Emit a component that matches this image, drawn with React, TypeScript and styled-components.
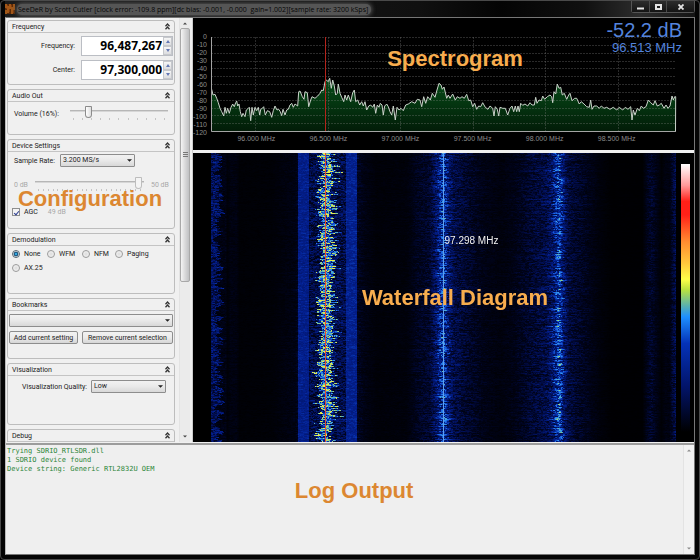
import React, { useEffect, useRef, useState } from 'react';
import styled, { createGlobalStyle, css } from 'styled-components';

const ui = 'Roboto, "Liberation Sans", sans-serif';
const sans = '"Liberation Sans", Arial, sans-serif';

const GlobalStyle = createGlobalStyle`
  * { box-sizing: border-box; }
  body { margin: 0; background: #000; font-family: ${ui}; font-size: 7px; line-height: 10px; color: #222; }
  button, input, select, textarea { font: inherit; color: inherit; margin: 0; }
`;

/* ---------- window frame ---------- */

const Frame = styled.div`
  display: flex;
  flex-direction: column;
  height: 100vh;
  min-height: 480px;
  padding: 0 4px 4px 4px;
  background: #050505;
  border: 1px solid #4a4a4a;
  border-radius: 4px;
  overflow: hidden;
`;

const TitleBar = styled.header`
  display: flex;
  align-items: flex-start;
  flex: none;
  height: 16px;
  background: linear-gradient(90deg, #1c1c1c 0%, #101010 60%, #040404 72%, #101010 84%, #2c2c2c 92%, #141414 100%);
`;

const TitleIcon = styled.svg`
  width: 10px;
  height: 10px;
  margin: 3px 2px 0 0;
  flex: none;
`;

const TitleText = styled.h1`
  margin: 3px 0 0;
  padding: 0 3px 0 1px;
  font: 400 7px/11px "Open Sans", "Noto Sans", sans-serif;
  color: #050505;
  white-space: pre;
  background: #555;
  border-radius: 5px;
  box-shadow: 0 0 4px 1px #555;
`;

const WindowButtons = styled.div`
  display: flex;
  margin-left: auto;
  height: 12px;
  border: 1px solid #555;
  border-top: 0;
  border-radius: 0 0 3px 3px;
`;

const WindowButton = styled.button<{ $wide?: boolean }>`
  width: ${(p) => (p.$wide ? 28 : 17)}px;
  padding: 0;
  border: 0;
  display: grid;
  place-items: center;
  background: linear-gradient(#2c2c2c, #141414);
  & + & { border-left: 1px solid #4a4a4a; }
`;

const Client = styled.main`
  display: flex;
  flex-direction: column;
  flex: 1;
  min-height: 0;
  border: 1px solid #777;
  border-left-color: #bbb;
  background: #f0f0f0;
`;

const Workspace = styled.div`
  display: flex;
  flex: 1;
  min-height: 0;
`;

/* ---------- sidebar ---------- */

const Sidebar = styled.aside`
  position: relative;
  display: flex;
  flex: none;
  width: 187px;
  padding-left: 1px;
  overflow: hidden;
  border-right: 1px solid #ccc;
`;

const Panels = styled.div`
  display: flex;
  flex-direction: column;
  gap: 4px;
  width: 168px;
  padding-top: 2px;
`;

const Panel = styled.section<{ $min: number }>`
  flex: none;
  min-height: ${(p) => p.$min}px;
  border: 1px solid #bdbdbd;
  border-radius: 3px;
`;

const PanelHead = styled.h2`
  display: flex;
  align-items: center;
  justify-content: space-between;
  height: 12px;
  margin: 0;
  padding: 0 4px;
  font-size: 7px;
  font-weight: 400;
  border-bottom: 1px solid #c4c4c4;
`;

const CollapseButton = styled.button`
  display: grid;
  padding: 0;
  border: 0;
  background: none;
`;

const SpinRow = styled.label`
  display: grid;
  grid-template-columns: 1fr 92px;
  column-gap: 6px;
  align-items: center;
  text-align: right;
  padding-right: 1px;
  margin-top: 3px;
  & + & { margin-top: 4px; }
`;

const SpinBox = styled.span`
  display: flex;
  height: 20px;
  background: #fff;
  border: 1px solid #bbbec4;
`;

const SpinInput = styled.input`
  flex: 1;
  min-width: 0;
  padding: 0 1px 0 0;
  border: 0;
  outline: 0;
  background: none;
  color: #000;
  font: 700 12px/18px "Open Sans", "Noto Sans", sans-serif;
  text-align: right;
`;

const SpinButtons = styled.span`
  display: grid;
  grid-template-rows: 1fr 1fr;
  width: 9px;
`;

const SpinButton = styled.button`
  display: grid;
  place-items: center;
  padding: 0;
  min-height: 0;
  border: 1px solid #c6c8cc;
  background: linear-gradient(#f6f6f6, #dcdde0);
`;

const SliderRow = styled.div<{ $cols: string; $muted?: boolean; $top: number }>`
  display: grid;
  grid-template-columns: ${(p) => p.$cols};
  padding: 0 6px;
  margin-top: ${(p) => p.$top}px;
  color: ${(p) => (p.$muted ? '#a8a8a8' : 'inherit')};
`;

const SliderCaption = styled.label`
  padding-top: 4px;
`;

const GainMax = styled.span`
  padding: 4px 0 0 7px;
  white-space: nowrap;
`;

const SliderTrack = styled.div`
  display: grid;
  row-gap: 1px;
`;

const thumb = css`
  appearance: none;
  width: 7px;
  height: 12px;
  margin-top: -5px;
  border: 1px solid #8b8b8b;
  border-radius: 1px 1px 4px 4px;
  background: linear-gradient(90deg, #fff, #dedede);
`;

const Slider = styled.input`
  appearance: none;
  width: 100%;
  height: 12px;
  background: none;
  &::-webkit-slider-runnable-track { height: 2px; background: #d6d6d6; border-top: 1px solid #b6b6b6; }
  &::-webkit-slider-thumb { ${thumb} }
  &:disabled::-webkit-slider-thumb { border-color: #bdbdbd; background: #f4f4f4; }
`;

const Ticks = styled.div`
  display: flex;
  justify-content: space-between;
  height: 2px;
  padding: 0 3px;
  i { width: 1px; background: #c4c4c4; }
`;

const Field = styled.div<{ $cols: string; $top: number; $align?: string }>`
  display: grid;
  grid-template-columns: ${(p) => p.$cols};
  align-items: center;
  padding: 0 1px;
  margin-top: ${(p) => p.$top}px;
  text-align: ${(p) => p.$align ?? 'left'};
`;

const FieldLabel = styled.label`
  padding: 0 4px 0 5px;
  white-space: nowrap;
`;

const SelectBox = styled.span`
  position: relative;
  display: block;
  svg { position: absolute; right: 3px; top: 5px; pointer-events: none; }
`;

const Select = styled.select`
  appearance: none;
  display: block;
  width: 100%;
  height: 13px;
  padding: 0 2px;
  border: 1px solid #8d8d8d;
  border-radius: 1px;
  background: linear-gradient(#f2f2f2 0%, #e9e9e9 50%, #d8d8d8 100%);
  line-height: 11px;
`;

const AgcRow = styled.div`
  display: flex;
  align-items: center;
  gap: 10px;
  padding-left: 4px;
  margin-top: 16px;
  color: #a8a8a8;
`;

const Choice = styled.label`
  display: flex;
  align-items: center;
  gap: 4px;
  color: #222;
`;

const CheckBox = styled.input`
  appearance: none;
  display: grid;
  place-items: center;
  width: 8px;
  height: 8px;
  border: 1px solid #8e8f8f;
  background: #f4f4f4;
  &:checked::before {
    content: "";
    width: 2px;
    height: 4px;
    border: solid #2f3f93;
    border-width: 0 1px 1px 0;
    transform: rotate(40deg);
  }
`;

const RadioGrid = styled.div`
  display: grid;
  grid-template-columns: 35px 35px 33px auto;
  row-gap: 4px;
  padding: 3px 0 0 4px;
`;

const Radio = styled.input`
  appearance: none;
  width: 8px;
  height: 8px;
  border: 1px solid #9a9a9a;
  border-radius: 50%;
  background: radial-gradient(#dcdcdc, #fafafa);
  &:checked { border-color: #54646e; background: radial-gradient(#39b0e8 0 15%, #103f66 45%, #e8eef2 65%); }
`;

const ButtonRow = styled.div`
  display: grid;
  grid-template-columns: 69px 1fr;
  gap: 4px;
  padding: 0 1px;
  margin-top: 4px;
`;

const PushButton = styled.button`
  height: 13px;
  padding: 0;
  border: 1px solid #8d8d8d;
  border-radius: 2px;
  background: linear-gradient(#f2f2f2 0%, #ebebeb 50%, #d6d6d6 100%);
  line-height: 10px;
  white-space: nowrap;
`;

const ScrollBar = styled.div<{ $faded?: boolean }>`
  display: flex;
  flex-direction: column;
  align-items: center;
  justify-content: space-between;
  width: 11px;
  padding: 4px 0;
  background: ${(p) => (p.$faded ? '#f2f2f2' : '#ebebeb')};
  border-left: 1px solid #e3e3e3;
  color: ${(p) => (p.$faded ? '#8a8a8a' : '#444')};
`;

const SideScroll = styled(ScrollBar)`
  margin-left: 4px;
`;

const ScrollThumb = styled.div`
  display: grid;
  place-items: center;
  width: 10px;
  height: 61%;
  margin: 3px 0 auto;
  border: 1px solid #a8a8a8;
  border-radius: 2px;
  background: linear-gradient(90deg, #f4f4f4, #d9d9da 50%, #bfc0c2);
`;

/* ---------- plots ---------- */

const Plots = styled.div`
  display: flex;
  flex-direction: column;
  flex: 1;
  min-width: 0;
  background: #000;
`;

const SpectrumPane = styled.section`
  position: relative;
  flex: none;
  display: grid;
  grid-template-columns: 18px 1fr 18px;
  grid-template-rows: 94px 12px;
  padding: 19px 0 7px;
  border-bottom: 3px solid #f0f0f0;
  height: 135px;
  color: #8c8c8c;
  font: 7px/8px ${sans};
`;

const LevelAxis = styled.div`
  display: flex;
  flex-direction: column;
  justify-content: space-between;
  margin: -4px 0;
  padding-right: 4px;
  text-align: right;
  span { display: flex; justify-content: flex-end; }
`;

const Graph = styled.svg`
  width: 100%;
  height: 100%;
  display: block;
  overflow: visible;
`;

const FrequencyAxis = styled.div`
  grid-column: 2;
  display: grid;
  grid-template-columns: repeat(6, 1fr);
  padding: 4px 5% 0 2%;
  text-align: center;
  white-space: nowrap;
`;

const Readout = styled.output`
  position: absolute;
  top: 1px;
  right: 12px;
  text-align: right;
  color: #5484dc;
  font: 20px/22px ${sans};
  small { display: block; font-size: 13px; line-height: 14px; }
`;

const WaterfallPane = styled.section`
  position: relative;
  flex: 1;
  min-height: 0;
  display: grid;
  grid-template-columns: 18px 1fr 18px;
`;

const WaterfallArea = styled.div`
  position: relative;
  grid-column: 2;
  min-height: 0;
`;

const Canvas = styled.canvas`
  position: absolute;
  inset: 0;
  width: 100%;
  height: 100%;
  image-rendering: pixelated;
`;

const Marker = styled.span`
  position: absolute;
  left: 50%;
  top: 28%;
  padding-left: 1px;
  color: #f0f0f0;
  font: 10px/14px ${sans};
`;

const ColorScale = styled.div`
  width: 9px;
  margin: 11px 0 10px 5px;
  background: linear-gradient(
    #fff 0%, #f99 8%, #ff2018 14%, #ff2018 19%, #ff8c30 29%, #ffc83c 37%, #ffff48 43%,
    #b8e040 47%, #58b0b0 53%, #1e90ff 57%, #0432b8 67%, #02146a 83%, #000 100%
  );
`;

const Caption = styled.strong<{ $x: string; $y: string; $dark?: boolean }>`
  position: absolute;
  left: ${(p) => p.$x};
  top: ${(p) => p.$y};
  transform: translate(-50%, -50%);
  color: ${(p) => (p.$dark ? '#dc8731' : '#f8ad4e')};
  font: 700 22px/24px ${sans};
  white-space: nowrap;
  pointer-events: none;
`;

/* ---------- log ---------- */

const LogPane = styled.section`
  position: relative;
  display: flex;
  flex: none;
  height: 111px;
  margin-top: 1px;
  border-top: 2px solid #9c9c9c;
`;

const LogText = styled.textarea`
  flex: 1;
  padding: 2px 1px;
  border: 0;
  outline: 0;
  resize: none;
  overflow: hidden;
  background: #efefef;
  color: #2b8538;
  font: 7px/9px "DejaVu Sans Mono", monospace;
`;

/* ---------- data ---------- */

const PLOT_W = 465;
const PLOT_H = 94;
const TUNED = 115;

/* x,y pairs of the signal trace, in thirds of a plot unit */
const TRACE =
  '2,157 6,174 12,172 17,184 22,197 27,214 32,224 38,237 42,211 46,229 50,214 55,229 60,211 65,201 70,209 74,197 77,192 80,207 84,201 88,224 92,239 96,229 102,239 106,219 112,214 115,211 119,251 123,211 127,234 132,211 137,221 142,211 146,234 149,217 154,214 158,209 163,234 169,221 176,224 182,241 187,221 192,207 198,219 203,217 208,224 212,236 216,217 222,234 227,219 232,217 237,204 242,199 247,211 252,201 260,207 263,164 267,162 274,179 279,187 282,164 289,167 293,209 299,189 303,179 312,184 320,177 327,169 332,159 337,161 342,134 346,129 352,134 356,124 361,154 365,129 370,147 374,174 379,169 382,141 387,169 392,181 398,194 402,174 407,189 412,174 419,194 425,167 430,159 434,194 440,189 446,204 452,194 457,207 462,194 467,219 473,207 479,204 485,211 490,201 494,229 499,204 504,211 508,199 513,204 517,234 521,207 527,201 532,209 537,224 542,234 547,207 553,249 558,211 564,219 570,214 577,221 584,204 592,201 602,194 612,199 619,187 627,189 632,209 638,179 644,199 650,179 658,189 664,169 672,181 678,159 684,139 690,144 694,157 699,150 707,184 712,174 717,184 725,171 733,189 739,179 747,184 753,179 760,184 767,172 773,191 779,189 785,209 791,199 797,217 803,207 809,209 815,197 823,211 831,217 837,207 845,214 849,237 853,209 859,217 863,237 867,211 875,214 883,214 890,234 897,214 903,207 908,224 913,207 917,224 921,207 925,224 929,199 935,205 942,201 950,207 957,197 963,204 970,204 974,181 978,199 984,189 991,191 995,177 1001,187 1009,179 1017,174 1022,179 1025,197 1029,164 1034,171 1039,141 1044,154 1049,151 1054,174 1060,169 1067,187 1073,174 1077,169 1083,191 1091,184 1097,184 1105,201 1111,194 1119,201 1127,209 1135,211 1139,189 1143,217 1149,207 1157,207 1165,214 1171,207 1179,214 1187,211 1197,217 1207,211 1217,219 1225,211 1235,219 1243,211 1251,217 1259,209 1263,249 1267,219 1272,234 1279,214 1285,221 1291,207 1297,214 1305,209 1312,189 1319,197 1327,204 1332,191 1339,207 1345,204 1351,199 1359,214 1365,204 1371,214 1377,207 1383,177 1387,189 1391,179 1394,179';

const tracePoints = TRACE.split(' ')
  .map((p) => p.split(',').map(Number))
  .map(([x, y]) => `${(x / 3).toFixed(1)},${(y / 3).toFixed(1)}`)
  .join(' L');

const LEVELS = Array.from({ length: 13 }, (_, i) => (i === 0 ? '0' : String(-10 * i)));
const FREQUENCIES = ['96.000', '96.500', '97.000', '97.500', '98.000', '98.500'];
const LOG = 'Trying SDRIO_RTLSDR.dll\n1 SDRIO device found\nDevice string: Generic RTL2832U OEM';

/* mean signal level along the frequency axis */
const PROFILE: [number, number][] = [
  [0, 0.26], [7, 0.22], [13, 0.1], [16, 0.03], [19, 0.06], [25, 0.06], [28, 0.02], [60, 0.025],
  [84, 0.07], [86, 0.1], [87, 0.34], [97, 0.34], [98, 0.18], [105, 0.24], [108, 0.36], [113, 0.46],
  [119, 0.48], [123, 0.42], [128, 0.26], [134, 0.2], [135, 0.35], [145, 0.35], [146, 0.12], [153, 0.07],
  [165, 0.03], [195, 0.04], [205, 0.1], [218, 0.14], [226, 0.28], [232, 0.42], [236, 0.3],
  [242, 0.2], [255, 0.14], [272, 0.08], [290, 0.05], [303, 0.08], [318, 0.14], [334, 0.19], [341, 0.27],
  [348, 0.43], [352, 0.28], [357, 0.17], [375, 0.1], [388, 0.04], [400, 0.01], [431, 0.01],
  [436, 0.1], [440, 0.13], [446, 0.07], [450, 0.02], [454, 0.06], [458, 0.06], [461, 0.14], [465, 0.22],
];

const COLOURS: [number, number, number, number][] = [
  [0, 0, 0, 0], [0.1, 0, 3, 26], [0.2, 1, 12, 72], [0.36, 3, 32, 146], [0.48, 26, 98, 225],
  [0.56, 50, 150, 240], [0.64, 120, 195, 150], [0.76, 225, 235, 75], [1, 255, 255, 80],
];

function levelAt(x: number) {
  for (let i = 1; i < PROFILE.length; i++) {
    const [x1, v1] = PROFILE[i];
    if (x <= x1) {
      const [x0, v0] = PROFILE[i - 1];
      return v0 + ((v1 - v0) * (x - x0)) / (x1 - x0);
    }
  }
  return 0;
}

function colourAt(t: number) {
  for (let i = 1; i < COLOURS.length; i++) {
    const b = COLOURS[i];
    if (t <= b[0]) {
      const a = COLOURS[i - 1];
      const k = (t - a[0]) / (b[0] - a[0]);
      return [1, 2, 3].map((c) => a[c] + (b[c] - a[c]) * k);
    }
  }
  return [255, 255, 80];
}

function random(seed: number) {
  let s = seed;
  return () => {
    s = (s * 1664525 + 1013904223) >>> 0;
    return s / 4294967296;
  };
}

function paintWaterfall(canvas: HTMLCanvasElement) {
  const w = canvas.width;
  const h = canvas.height;
  const ctx = canvas.getContext('2d');
  if (!ctx) return;
  const img = ctx.createImageData(w, h);
  const rnd = random(4711);
  let edge = 0;
  let sway = 0;
  for (let y = 0; y < h; y++) {
    edge = edge * 0.6 + (rnd() - 0.5) * 7;
    sway = sway * 0.7 + (rnd() - 0.5) * 4;
    const left = 110 - rnd() * rnd() * 7 + sway;
    const right = 119 + rnd() * rnd() * 12 + sway;
    const rowGain = 0.85 + rnd() * 0.3;
    let n = 0;
    for (let x = 0; x < w; x++) {
      if (x % 2 === 0 || rnd() > 0.6) n = n * 0.3 + (rnd() - 0.5) * 1.1;
      const band = (x >= 87 && x < 98) || (x >= 135 && x < 146);
      let v: number;
      if (x < 14) v = x < 8 + edge ? 0.24 * (1 + n * 0.9) : 0.07 * (1 + n);
      else if (band) v = levelAt(x) * (1 + n * 0.2);
      else if (x > 98 && x < 135) {
        v = x > left && x < right ? 0.53 + n * 0.48 : 0.2 * (1 + n);
      } else {
        const centre = x > 330 && x < 362 ? sway * 0.5 : 0;
        v = levelAt(x + centre) * rowGain * (1 + n * 0.8);
      }
      const [r, g, b] = colourAt(Math.max(0, Math.min(1, v)));
      const o = (y * w + x) * 4;
      img.data[o] = r;
      img.data[o + 1] = g;
      img.data[o + 2] = b;
      img.data[o + 3] = 255;
    }
  }
  ctx.putImageData(img, 0, 0);
  ctx.fillStyle = '#5ea0ee';
  ctx.fillRect(232, 0, 1, h);
  ctx.fillStyle = '#e24a34';
  ctx.fillRect(TUNED - 1, 0, 1, h);
}

/* ---------- parts ---------- */

const Arrow = ({ up, size = 5 }: { up?: boolean; size?: number }) => (
  <svg width={size} height="3" viewBox="0 0 6 3" aria-hidden="true">
    <path d={up ? 'M0 3 3 0 6 3Z' : 'M0 0 3 3 6 0Z'} fill="currentColor" />
  </svg>
);

function Group({ title, min, children }: { title: string; min: number; children?: React.ReactNode }) {
  return (
    <Panel $min={min}>
      <PanelHead>
        {title}
        <CollapseButton aria-label={`Collapse ${title}`}>
          <svg width="5" height="7" viewBox="0 0 5 7" fill="none" stroke="#333" strokeWidth="1.3">
            <path d="M.5 3.2 2.5 1 4.5 3.2M.5 6.2 2.5 4 4.5 6.2" />
          </svg>
        </CollapseButton>
      </PanelHead>
      {children}
    </Panel>
  );
}

function Spin({ label, initial }: { label: string; initial: number }) {
  const [value, setValue] = useState(initial);
  return (
    <SpinRow>
      {label}
      <SpinBox>
        <SpinInput
          value={value.toLocaleString('en-US')}
          onChange={(e) => setValue(Number(e.target.value.replace(/\D/g, '')))}
        />
        <SpinButtons>
          <SpinButton aria-label="Increase" onClick={() => setValue(value + 1)}>
            <svg width="4" height="3" viewBox="0 0 4 3"><path d="M0 3 2 0 4 3Z" fill="#6478b4" /></svg>
          </SpinButton>
          <SpinButton aria-label="Decrease" onClick={() => setValue(value - 1)}>
            <svg width="4" height="3" viewBox="0 0 4 3"><path d="M0 0 2 3 4 0Z" fill="#6478b4" /></svg>
          </SpinButton>
        </SpinButtons>
      </SpinBox>
    </SpinRow>
  );
}

const TickRow = ({ count }: { count: number }) => (
  <Ticks>{Array.from({ length: count }, (_, i) => <i key={i} />)}</Ticks>
);

function Settings() {
  return (
    <Sidebar>
      <Panels>
        <Group title="Frequency" min={65}>
          <Spin label="Frequency:" initial={96487267} />
          <Spin label="Center:" initial={97300000} />
        </Group>
        <Group title="Audio Out" min={46}>
          <SliderRow $cols="56px 1fr" $top={3}>
            <SliderCaption htmlFor="volume">Volume (16%):</SliderCaption>
            <SliderTrack>
              <Slider id="volume" type="range" min={0} max={100} defaultValue={16} />
              <TickRow count={11} />
            </SliderTrack>
          </SliderRow>
        </Group>
        <Group title="Device Settings" min={90}>
          <Field $cols="51px 75px" $top={2}>
            <FieldLabel htmlFor="rate">Sample Rate:</FieldLabel>
            <SelectBox>
              <Select id="rate"><option>3.200 MS/s</option></Select>
              <Arrow />
            </SelectBox>
          </Field>
          <SliderRow $cols="21px 109px 1fr" $muted $top={9}>
            <SliderCaption htmlFor="gain">0 dB</SliderCaption>
            <SliderTrack>
              <Slider id="gain" type="range" min={0} max={50} defaultValue={49} disabled />
              <TickRow count={22} />
            </SliderTrack>
            <GainMax>50 dB</GainMax>
          </SliderRow>
          <AgcRow>
            <Choice><CheckBox type="checkbox" defaultChecked />AGC</Choice>
            49 dB
          </AgcRow>
        </Group>
        <Group title="Demodulation" min={61}>
          <RadioGrid>
            {['None', 'WFM', 'NFM', 'Paging', 'AX.25'].map((mode, i) => (
              <Choice key={mode}>
                <Radio type="radio" name="mode" defaultChecked={i === 0} />
                {mode}
              </Choice>
            ))}
          </RadioGrid>
        </Group>
        <Group title="Bookmarks" min={61}>
          <Field $cols="1fr" $top={3}>
            <SelectBox>
              <Select aria-label="Bookmarks"><option></option></Select>
              <Arrow />
            </SelectBox>
          </Field>
          <ButtonRow>
            <PushButton>Add current setting</PushButton>
            <PushButton>Remove current selection</PushButton>
          </ButtonRow>
        </Group>
        <Group title="Visualization" min={62}>
          <Field $cols="82px 75px" $top={4} $align="right">
            <FieldLabel htmlFor="quality">Visualization Quality:</FieldLabel>
            <SelectBox>
              <Select id="quality"><option>Low</option></Select>
              <Arrow />
            </SelectBox>
          </Field>
        </Group>
        <Group title="Debug" min={62} />
      </Panels>
      <SideScroll>
        <Arrow up size={4} />
        <ScrollThumb>
          <svg width="5" height="5" viewBox="0 0 5 5" stroke="#777"><path d="M0 .5H5M0 2.5H5M0 4.5H5" /></svg>
        </ScrollThumb>
        <Arrow size={4} />
      </SideScroll>
      <Caption $x="84px" $y="181px" $dark>Configuration</Caption>
    </Sidebar>
  );
}

function Spectrum() {
  return (
    <SpectrumPane>
      <LevelAxis>{LEVELS.map((l) => <span key={l}>{l}</span>)}</LevelAxis>
      <Graph viewBox={`0 0 ${PLOT_W} ${PLOT_H}`} preserveAspectRatio="none">
        <defs>
          <linearGradient id="fill" gradientUnits="userSpaceOnUse" x1="0" y1="40" x2="0" y2="94">
            <stop offset="0" stopColor="#064e18" />
            <stop offset="1" stopColor="#021c08" />
          </linearGradient>
        </defs>
        <path d={`M0,94 L${tracePoints} L464.5,94Z`} fill="url(#fill)" />
        <g stroke="#8a8a8a" strokeOpacity=".3" strokeDasharray="2 1">
          {LEVELS.map((l, i) => {
            const y = Math.round((i * PLOT_H) / 12) + 0.5;
            return <path key={l} d={`M0 ${y}H${PLOT_W}`} />;
          })}
          {FREQUENCIES.map((f, i) => {
            const x = Math.round(44 + i * 72.6) + 0.5;
            return <path key={f} d={`M${x} 0V${PLOT_H}`} />;
          })}
        </g>
        <path d={`M${tracePoints} L464.5,94`} fill="none" stroke="#c9d2c9" strokeWidth="1" />
        <path d={`M.5 0V94.5H${PLOT_W}`} fill="none" stroke="#a4a4a4" />
        <path d={`M${TUNED - 0.5} 0V94`} stroke="#b4241c" />
      </Graph>
      <FrequencyAxis>{FREQUENCIES.map((f) => <span key={f}>{f} MHz</span>)}</FrequencyAxis>
      <Readout>-52.2 dB<small>96.513 MHz</small></Readout>
      <Caption $x="52.3%" $y="41px">Spectrogram</Caption>
    </SpectrumPane>
  );
}

function Waterfall() {
  const ref = useRef<HTMLCanvasElement>(null);
  useEffect(() => {
    if (ref.current) paintWaterfall(ref.current);
  }, []);
  return (
    <WaterfallPane>
      <WaterfallArea>
        <Canvas ref={ref} width={PLOT_W} height={289} />
        <Marker>97.298 MHz</Marker>
      </WaterfallArea>
      <ColorScale />
      <Caption $x="52.3%" $y="50%">Waterfall Diagram</Caption>
    </WaterfallPane>
  );
}

export default function App() {
  return (
    <>
      <GlobalStyle />
      <Frame>
        <TitleBar>
          <TitleIcon viewBox="0 0 10 10" aria-hidden="true">
            <rect width="10" height="10" fill="#5a2a08" />
            <path d="M1 0V4M3 2V9M5 0V5M7 3V10M9 0V6M1 6V10" stroke="#e8862a" />
            <path d="M2 1V5M4 5V8M6 1V3M8 6V9" stroke="#a85014" />
          </TitleIcon>
          <TitleText>
            {'SeeDeR by Scott Cutler [clock error: -109.8 ppm][dc bias: -0.001, -0.000  gain=1.002][sample rate: 3200 kSps]'}
          </TitleText>
          <WindowButtons>
            <WindowButton aria-label="Minimize">
              <svg width="7" height="6" viewBox="0 0 7 6"><path d="M0 4.5H7" stroke="#e4e4e4" strokeWidth="2" /></svg>
            </WindowButton>
            <WindowButton aria-label="Maximize">
              <svg width="7" height="6" viewBox="0 0 7 6"><rect x="1" y="1" width="5" height="4" fill="none" stroke="#e4e4e4" strokeWidth="2" /></svg>
            </WindowButton>
            <WindowButton $wide aria-label="Close">
              <svg width="6" height="6" viewBox="0 0 6 6"><path d="M.5.5 5.5 5.5M5.5.5.5 5.5" stroke="#e4e4e4" strokeWidth="1.8" /></svg>
            </WindowButton>
          </WindowButtons>
        </TitleBar>
        <Client>
          <Workspace>
            <Settings />
            <Plots>
              <Spectrum />
              <Waterfall />
            </Plots>
          </Workspace>
          <LogPane>
            <LogText readOnly aria-label="Log" defaultValue={LOG} />
            <ScrollBar $faded>
              <Arrow up size={4} />
              <Arrow size={4} />
            </ScrollBar>
            <Caption $x="50.6%" $y="46px" $dark>Log Output</Caption>
          </LogPane>
        </Client>
      </Frame>
    </>
  );
}
